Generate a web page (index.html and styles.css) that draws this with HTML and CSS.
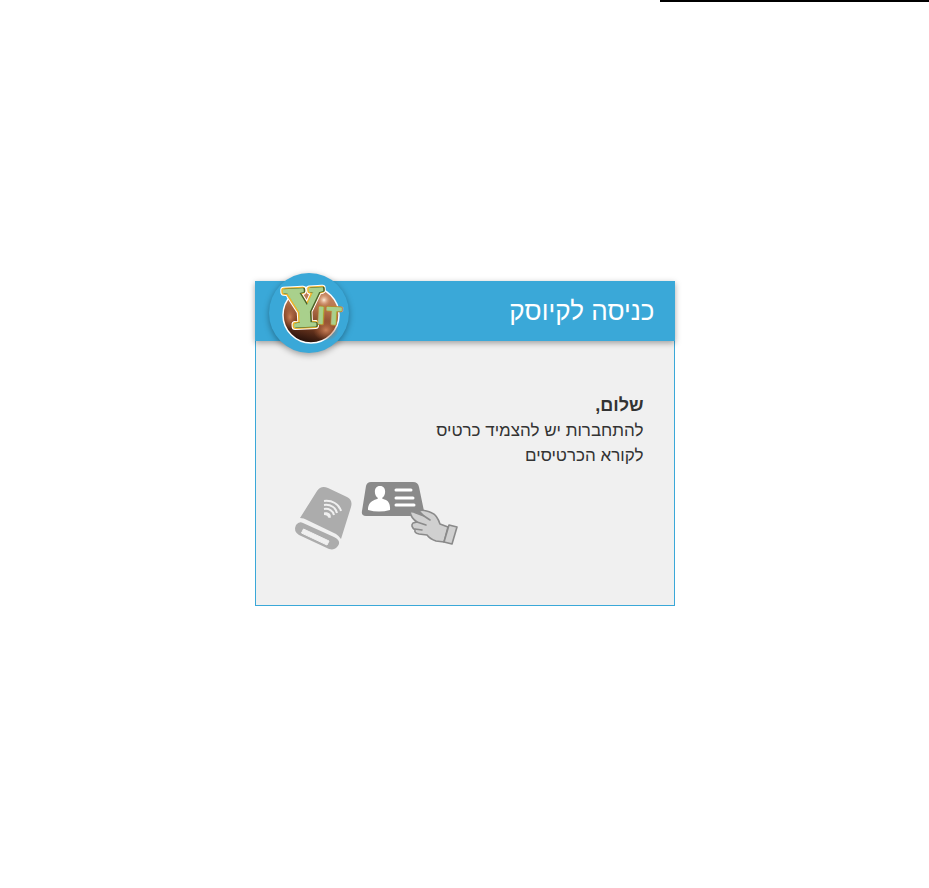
FILE: index.html
```html
<!DOCTYPE html>
<html lang="he" dir="rtl">
<head>
<meta charset="utf-8">
<meta name="viewport" content="width=device-width, initial-scale=1">
<title>כניסה לקיוסק</title>
<link rel="stylesheet" href="styles.css">
</head>
<body>
<div class="top-line"></div>
<main class="card">
  <header class="card-header">
    <h1 class="title">כניסה לקיוסק</h1>
    <div class="logo">
      <svg viewBox="0 0 80 80" direction="ltr" aria-label="YIT" role="img">
        <defs>
          <linearGradient id="ball" x1=".6" y1="0" x2=".35" y2="1">
            <stop offset="0" stop-color="#c98a66"/>
            <stop offset=".35" stop-color="#b3704a"/>
            <stop offset=".65" stop-color="#7d4024"/>
            <stop offset="1" stop-color="#1e0c08"/>
          </linearGradient>
          <radialGradient id="glow">
            <stop offset="0" stop-color="#c98058"/>
            <stop offset="1" stop-color="#a85c36" stop-opacity="0"/>
          </radialGradient>
          <radialGradient id="shine">
            <stop offset="0" stop-color="#fff0dc"/>
            <stop offset="1" stop-color="#d98c60" stop-opacity="0"/>
          </radialGradient>
        </defs>
        <circle cx="42" cy="42" r="28" fill="url(#ball)" stroke="#fff" stroke-width="1.5"/>
        <ellipse cx="21" cy="44" rx="7" ry="12" fill="url(#glow)"/>
        <ellipse cx="57" cy="57" rx="13" ry="11" fill="url(#glow)"/>
        <circle cx="55" cy="27" r="7" fill="url(#shine)"/>
        <g class="logo-y" transform="rotate(-3 34 34)">
          <text x="35" y="53" text-anchor="middle" class="edge-white">Y</text>
          <text x="35" y="53" text-anchor="middle" class="edge-gold">Y</text>
          <text x="36" y="53" text-anchor="middle" class="edge-dark">Y</text>
          <text x="35" y="53" text-anchor="middle" class="face">Y</text>
        </g>
        <g class="logo-it" transform="rotate(3 60 44)">
          <text x="52" y="51" text-anchor="middle" class="edge-gold">I</text>
          <text x="65" y="51" text-anchor="middle" class="edge-gold">T</text>
          <text x="52" y="51" text-anchor="middle" class="face">I</text>
          <text x="65" y="51" text-anchor="middle" class="face">T</text>
        </g>
      </svg>
    </div>
  </header>
  <section class="card-body">
    <h2 class="greeting">שלום,</h2>
    <p class="instruction">להתחברות יש להצמיד כרטיס<br>לקורא הכרטיסים</p>
    <svg class="illustration" viewBox="0 0 180 80" aria-hidden="true">
      <g>
        <path d="M31 15 Q35 9 42 12 L61 21 Q67 24 65 31 L55 63 Q53 60 50 58 L21 44 Q18 42 14 42 Z" fill="#acacac"/>
        <path d="M17 47 L48 61 Q54 64 53 68 Q50 75 43 73 L13 59 Q7 55 10 49 Q13 45 17 47Z" fill="#acacac"/>
        <path d="M17.500 53 L43 65 L41 69 L15.500 57Z" fill="#f0f0f0" stroke="#f0f0f0" stroke-width="1"/>
        <g fill="none" stroke="#f0f0f0" stroke-width="2">
          <path d="M38 25 C46 24 53 28 55 35"/>
          <path d="M38 29 C45 28 50 32 51 37"/>
          <path d="M38 33 C43 32 47 35 48 39"/>
        </g>
        <path d="M38 36.500 C42 35.500 46 38 44.500 42 L42 41.500 Q42 39 38 39Z" fill="#f0f0f0"/>
      </g>
      <g>
        <path d="M85 6 H127 Q132 6 133 11 L138 35 Q138 40 133 40 H80 Q75 40 76 35 L80 10 Q81 6 85 6Z" fill="#8a8a8a"/>
        <path d="M94 10 C101 10 100 20 96 22 C96 24 105 22 104 34 Q93 37 82 34 C82 23 92 24 92 22 C88 20 87 10 94 10Z" fill="#fff"/>
        <path d="M110 14 H125 M110 22 H127 M110 29 H128" fill="none" stroke="#fff" stroke-width="3" stroke-linecap="round"/>
      </g>
      <g fill="#d0d0d0" stroke="#8a8a8a" stroke-width="1.600" stroke-linejoin="round" stroke-linecap="round">
        <path d="M124 36 Q126 35 130 37 L138 40 L133 35 Q137 33 146 37 Q151 39 154 48 L162 51 L158 66 L150 65 Q144 63 141 59 L133 58 Q128 57 129 54 Q124 50 127 47 L131 46 Q125 42 124 36Z"/>
        <path d="M131 46 L140 49 M129 53 L136 54 M138 40 L144 44" fill="none"/>
        <path d="M163 49 L171 51 L166 68 L158 66Z"/>
      </g>
    </svg>
  </section>
</main>
</body>
</html>
```
FILE: styles.css
```css
* {
  box-sizing: border-box;
}

body {
  margin: 0;
  min-height: 100vh;
  display: flex;
  align-items: center;
  justify-content: center;
  padding: 15px 16px 16px;
  background: #fff;
  color: #333;
  font-family: "Liberation Sans", Arial, sans-serif;
}

.top-line {
  position: absolute;
  top: 0;
  right: 0;
  width: 29%;
  height: 2px;
  background: #000;
}

.card {
  width: 100%;
  max-width: 420px;
  background: #f0f0f0;
  border: 1px solid #3aa8d8;
  border-top: 0;
}

.card-header {
  position: relative;
  display: flex;
  align-items: center;
  height: 60px;
  margin: 0 -1px;
  padding: 0 20px;
  background: #3aa8d8;
  box-shadow: 0 2px 6px rgba(0, 0, 0, 0.35);
}

.title {
  margin: 0;
  color: #fff;
  font-size: 26px;
  font-weight: 400;
  line-height: 60px;
}

.logo {
  position: absolute;
  left: 14px;
  top: -8px;
  width: 80px;
  height: 80px;
  border-radius: 50%;
  background: #3aa8d8;
  box-shadow: 0 2px 6px rgba(0, 0, 0, 0.35);
}

.logo svg {
  display: block;
  width: 100%;
  height: 100%;
}

.logo text {
  font-family: "Liberation Serif", serif;
  font-weight: 700;
  stroke-linejoin: round;
}

.logo-y {
  font-size: 56px;
}

.logo .logo-it text {
  font-family: "Liberation Sans", sans-serif;
  font-size: 24px;
}

.edge-white {
  fill: #fff;
  stroke: #fff;
  stroke-width: 7px;
}

.edge-gold {
  fill: #f0b429;
  stroke: #f0b429;
  stroke-width: 5px;
}

.edge-dark {
  fill: #44602c;
  stroke: #44602c;
  stroke-width: 3px;
}

.face {
  fill: #a9d08c;
  stroke: #a9d08c;
  stroke-width: 2px;
}

.logo-it .edge-gold {
  fill: #b98a2c;
  stroke: #b98a2c;
  stroke-width: 3px;
}

.logo-it .face {
  stroke-width: 1px;
}

.card-body {
  padding: 52px 30px 49px;
}

.greeting {
  margin: 0;
  font-size: 18px;
  font-weight: 700;
  line-height: 25px;
}

.instruction {
  margin: 0;
  font-size: 17px;
  line-height: 25px;
}

.illustration {
  display: block;
  width: 180px;
  height: 80px;
  margin: 8px auto 0 0;
}
```
